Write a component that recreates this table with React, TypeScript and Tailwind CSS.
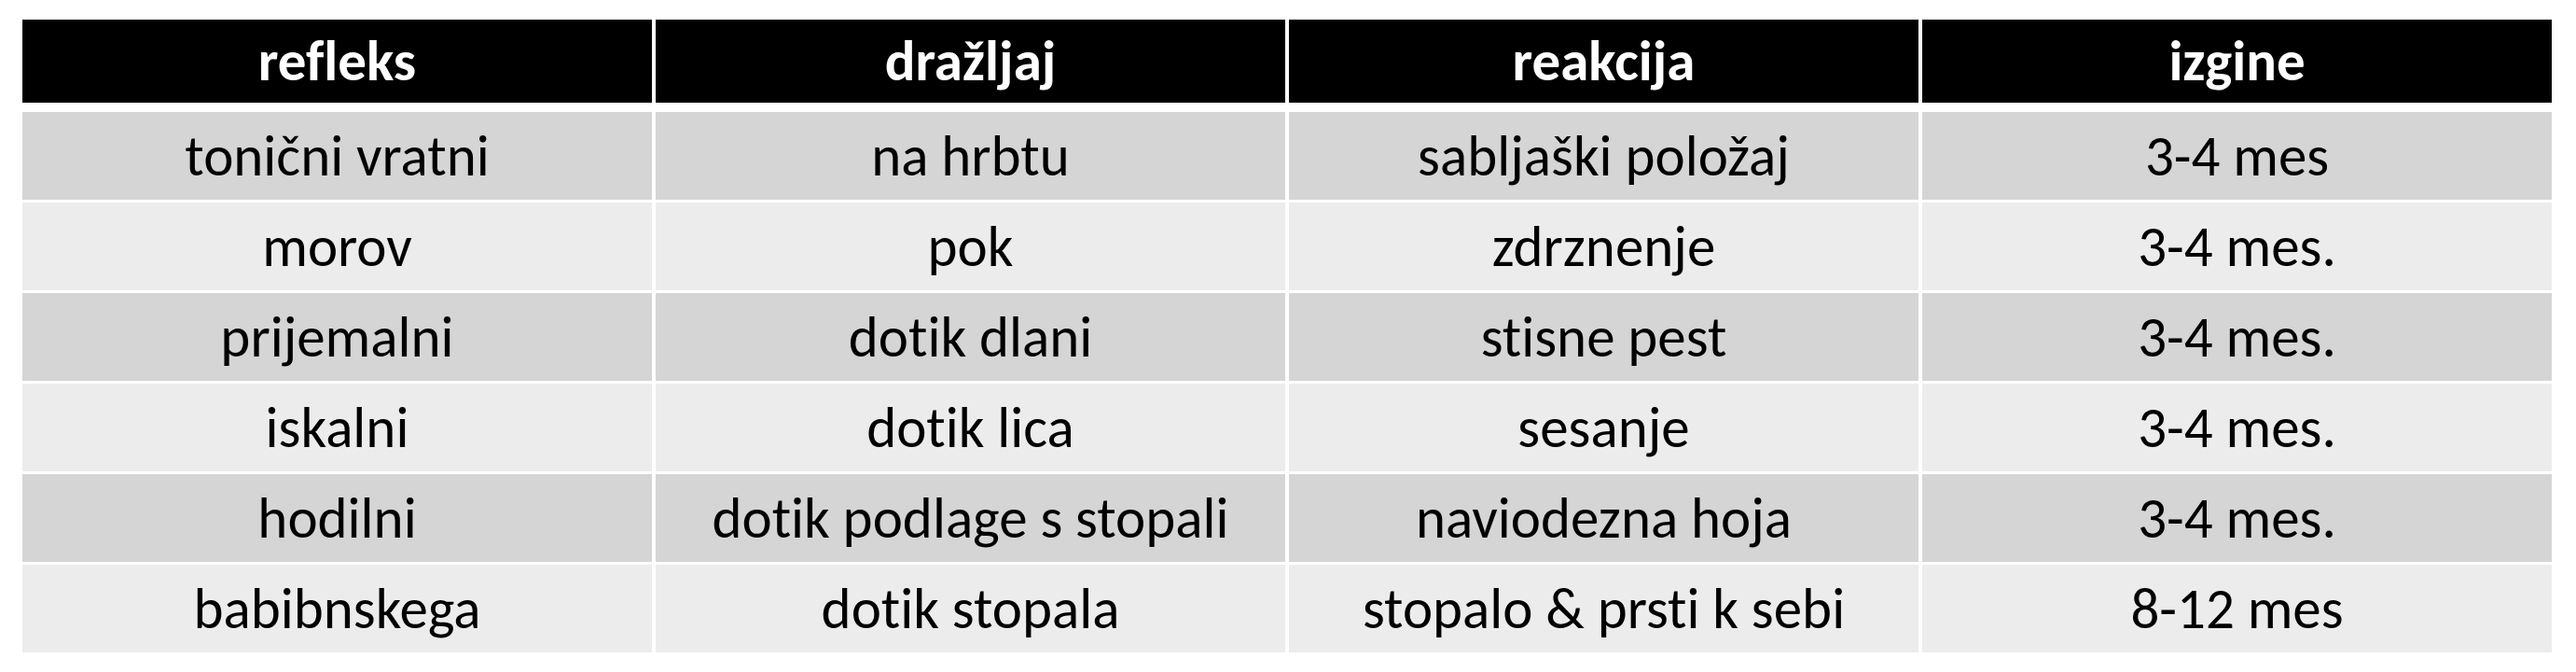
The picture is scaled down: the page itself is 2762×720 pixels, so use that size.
import React from "react";

const rows: [string, string, string, string][] = [
  ["tonični vratni", "na hrbtu", "sabljaški položaj", "3-4 mes"],
  ["morov", "pok", "zdrznenje", "3-4 mes."],
  ["prijemalni", "dotik dlani", "stisne pest", "3-4 mes."],
  ["iskalni", "dotik lica", "sesanje", "3-4 mes."],
  ["hodilni", "dotik podlage s stopali", "naviodezna hoja", "3-4 mes."],
  ["babibnskega", "dotik stopala", "stopalo & prsti k sebi", "8-12 mes"],
];

const headers = ["refleks", "dražljaj", "reakcija", "izgine"];

export default function App() {
  return (
    <div className="w-[2762px] h-[720px] bg-white pl-[24px] pt-[21px] font-['Carlito','Lato',sans-serif] [font-variant-ligatures:none]">
      <div className="w-[2712px] flex flex-col">
        <div className="grid grid-cols-4 gap-x-[4px] h-[89px]">
          {headers.map((h) => (
            <div
              key={h}
              className="bg-black text-white font-bold text-[61px] leading-none flex items-center justify-center"
            >
              {h}
            </div>
          ))}
        </div>
        <div className="flex flex-col gap-y-[3px] mt-[10px]">
          {rows.map((r, i) => (
            <div key={i} className="grid grid-cols-4 gap-x-[4px] h-[94px]">
              {r.map((c, j) => (
                <div
                  key={j}
                  className={`${i % 2 === 0 ? "bg-[#d5d5d5]" : "bg-[#ececec]"} text-black text-[61px] leading-none flex items-center justify-center`}
                >
                  {c}
                </div>
              ))}
            </div>
          ))}
        </div>
      </div>
    </div>
  );
}
